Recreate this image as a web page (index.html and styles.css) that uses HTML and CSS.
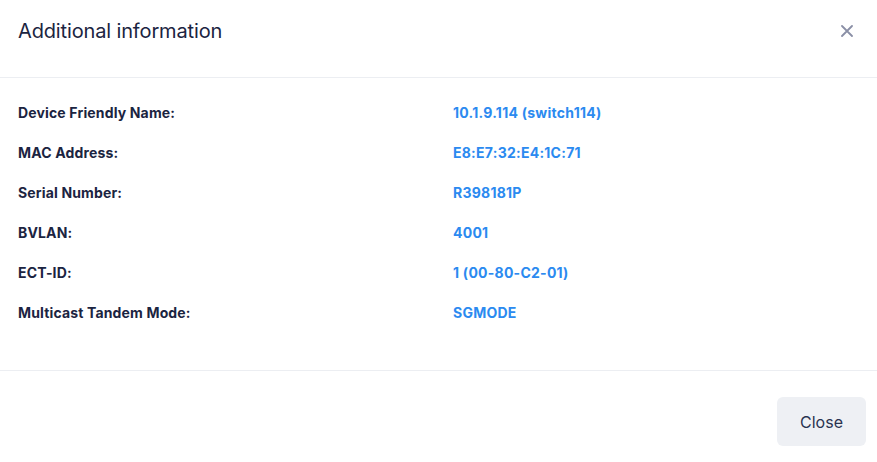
FILE: index.html
```html
<!DOCTYPE html>
<html>
<head>
<meta charset="utf-8">
<link rel="stylesheet" href="styles.css">
</head>
<body>
<div class="modal">
  <div class="modal-header">
    <h2 class="modal-title">Additional information</h2>
    <button class="close-x" aria-label="Close">
      <svg width="12" height="12" viewBox="0 0 12 12"><path d="M1 1L11 11M11 1L1 11" stroke="#8a8fa6" stroke-width="1.8" stroke-linecap="round"/></svg>
    </button>
  </div>
  <div class="modal-body">
    <dl class="info">
      <dt>Device Friendly Name:</dt><dd>10.1.9.114 (switch114)</dd>
      <dt>MAC Address:</dt><dd>E8:E7:32:E4:1C:71</dd>
      <dt>Serial Number:</dt><dd>R398181P</dd>
      <dt>BVLAN:</dt><dd>4001</dd>
      <dt>ECT-ID:</dt><dd>1 (00-80-C2-01)</dd>
      <dt>Multicast Tandem Mode:</dt><dd>SGMODE</dd>
    </dl>
  </div>
  <div class="modal-footer">
    <button class="btn">Close</button>
  </div>
</div>
</body>
</html>
```
FILE: styles.css
```css
* { box-sizing: border-box; }
html, body { margin: 0; padding: 0; background: #fff; }
body { font-family: Inter, "Noto Sans", sans-serif; color: #1b2441; }
.modal { width: 877px; height: 462px; display: flex; flex-direction: column; }
.modal-header {
  height: 78px;
  border-bottom: 1px solid #eceef2;
  display: flex;
  align-items: flex-start;
  justify-content: space-between;
  padding: 19px 18px 0 18px;
}
.modal-title { margin: 0; font-size: 20px; line-height: 24px; font-weight: 400; letter-spacing: -0.14px; color: #1b2441; }
.close-x { background: none; border: 0; padding: 0; margin: 6px 6px 0 0; width: 12px; height: 12px; display: flex; cursor: pointer; }
.modal-body { padding: 15px 18px 0 18px; height: 293px; border-bottom: 1px solid #eceef2; }
.info { margin: 0; display: grid; grid-template-columns: 405px 1fr; column-gap: 30px; }
.info dt, .info dd { margin: 0; font-size: 14px; line-height: 40px; font-weight: 700; }
.info dt { color: #1b2441; letter-spacing: 0.15px; }
.info dd { color: #2b8af0; letter-spacing: 0.25px; }
.modal-footer { flex: 1; display: flex; justify-content: flex-end; align-items: flex-start; padding: 26px 11px 0 0; }
.btn {
  width: 89px; height: 49px;
  border: 0; border-radius: 6px;
  background: #eef0f4;
  font-family: Inter, "Noto Sans", sans-serif;
  font-size: 16px; color: #2a3350;
  cursor: pointer;
}
```
